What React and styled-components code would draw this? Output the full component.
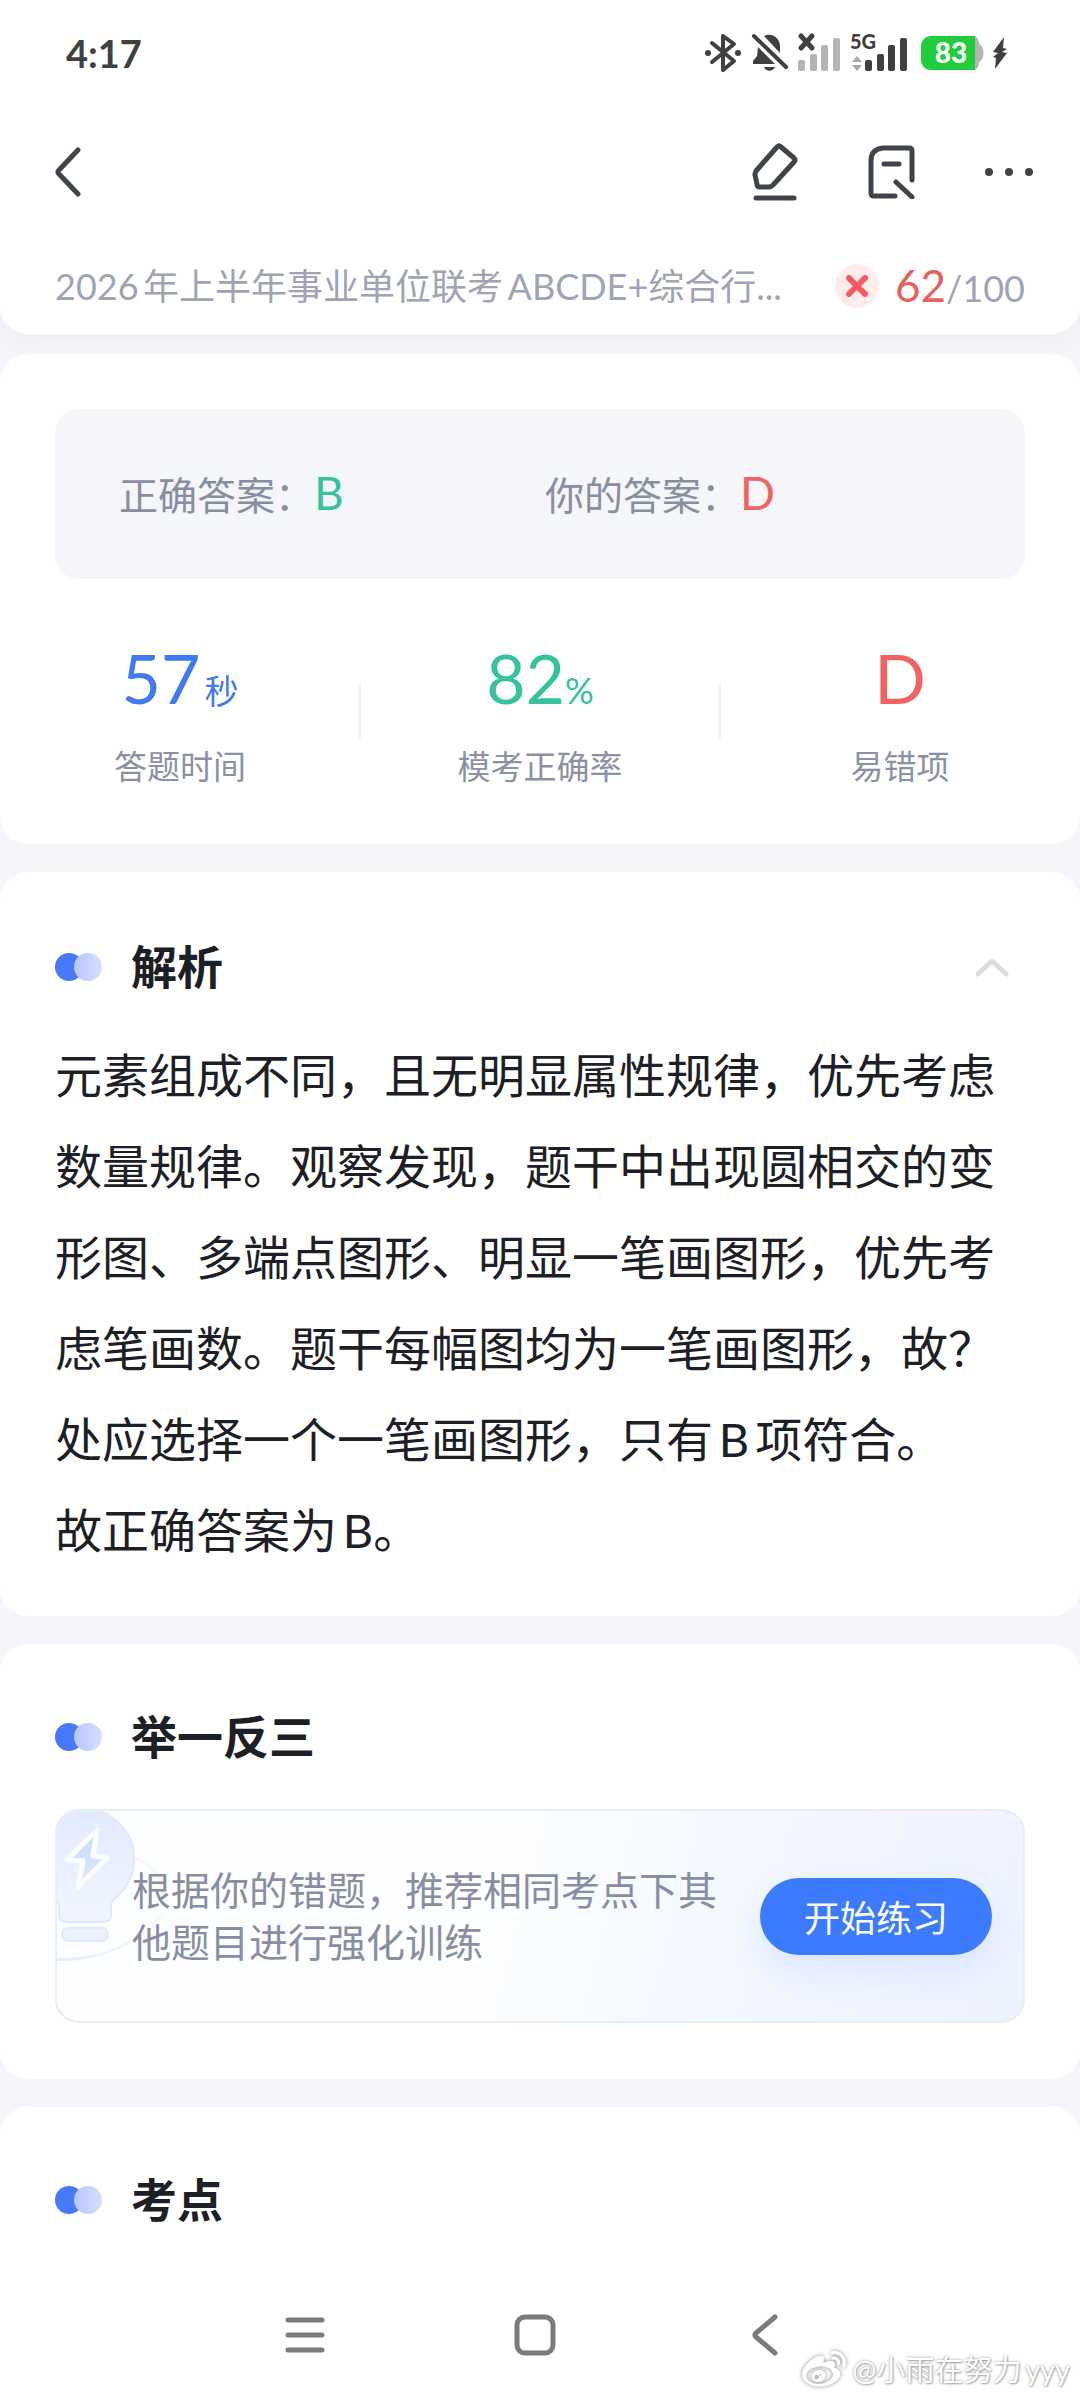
import React from "react";
import styled, { createGlobalStyle } from "styled-components";
import { FaWeibo } from "react-icons/fa";

const GlobalStyle = createGlobalStyle`
  *, *::before, *::after { box-sizing: border-box; }
  body {
    margin: 0;
    background: #f5f6fa;
    font-family: Lato, "Noto Sans CJK SC", sans-serif;
    text-autospace: normal;
  }
  h2, p, dl, dt, dd { margin: 0; }
  button {
    border: 0;
    padding: 0;
    background: none;
    font: inherit;
    color: inherit;
    cursor: pointer;
  }
  svg { display: block; flex: none; }
`;

const Screen = styled.div`
  position: relative;
  display: flex;
  flex-direction: column;
  min-height: 100vh;
`;

const Header = styled.header`
  position: relative;
  background: #fff;
  border-radius: 0 0 28px 28px;
  box-shadow: 0 4px 28px rgba(40, 50, 80, 0.05);
`;

const StatusBar = styled.div`
  display: flex;
  align-items: center;
  justify-content: space-between;
  height: 106px;
  padding: 0 72px 0 66px;
  color: #404040;
`;

const Clock = styled.time`
  font-size: 38px;
  font-weight: 700;
  line-height: 48px;
`;

const StatusIcons = styled.div`
  display: flex;
  align-items: center;
  gap: 10px;
  svg { overflow: visible; }
`;

const Toolbar = styled.nav`
  display: flex;
  align-items: center;
  justify-content: space-between;
  height: 132px;
  padding: 0 39px 0 36px;
  color: #3f444a;
`;

const Tools = styled.div`
  display: flex;
  gap: 53px;
`;

const IconButton = styled.button`
  display: flex;
  align-items: center;
  justify-content: center;
  width: 64px;
  height: 64px;
`;

const PaperRow = styled.div`
  display: flex;
  align-items: center;
  height: 96px;
  padding: 0 55px;
  color: #9ea4b5;
  font-size: 36px;
`;

const PaperTitle = styled.div`
  flex: 1;
  min-width: 0;
  margin-right: 44px;
  overflow: hidden;
  line-height: 56px;
  white-space: nowrap;
  text-overflow: ellipsis;
`;

const WrongMark = styled.span`
  display: flex;
  align-items: center;
  justify-content: center;
  width: 44px;
  height: 44px;
  margin-right: 16px;
  border-radius: 50%;
  background: #ffecec;
`;

const Score = styled.div`
  display: flex;
  align-items: baseline;
  line-height: 48px;
  white-space: nowrap;
`;

const ScoreNow = styled.span`
  color: #e8605e;
  font-size: 44px;
`;

const Main = styled.main`
  display: flex;
  flex: 1;
  flex-direction: column;
  gap: 28px;
  margin-top: 20px;
`;

const Card = styled.section`
  padding: ${(p) => p.$pad};
  border-radius: ${(p) => (p.$last ? "28px 28px 0 0" : "28px")};
  background: #fff;
  flex-grow: ${(p) => (p.$last ? 1 : 0)};
`;

const AnswerBox = styled.dl`
  display: grid;
  grid-template-columns: 1fr 1fr;
  align-items: center;
  height: 170px;
  margin: 0 55px;
  padding: 0 54px 0 64px;
  border-radius: 24px;
  background: #f5f6fa;
`;

const Answer = styled.div`
  display: flex;
  align-items: baseline;
  color: #868ea2;
  font-size: 39px;
  line-height: 56px;
`;

const AnswerValue = styled.dd`
  color: ${(p) => p.$color};
  font-size: 46px;
`;

const Stats = styled.dl`
  display: grid;
  grid-template-columns: repeat(3, 1fr);
  margin-top: 59px;
`;

const Stat = styled.div`
  position: relative;
  display: flex;
  flex-direction: column-reverse;
  align-items: center;
  &:not(:last-child)::after {
    content: "";
    position: absolute;
    top: 46px;
    right: -1px;
    width: 3px;
    height: 55px;
    background: #f1f4f6;
  }
`;

const StatValue = styled.dd`
  display: flex;
  align-items: baseline;
  height: 80px;
  color: ${(p) => p.$color};
  font-size: 68px;
  line-height: 80px;
`;

const Unit = styled.small`
  margin-left: ${(p) => (p.$spaced ? "4px" : "0")};
  font-size: ${(p) => (p.$spaced ? "34px" : "36px")};
  line-height: 48px;
`;

const StatLabel = styled.dt`
  margin-top: 24px;
  color: #8a91a5;
  font-size: 33px;
  line-height: 48px;
`;

const CardHead = styled.div`
  display: flex;
  align-items: center;
  height: 70px;
  gap: 28px;
`;

const CardTitle = styled.h2`
  flex: 1;
  color: #1c2024;
  font-size: 46px;
  font-weight: 700;
  line-height: 70px;
`;

const Paragraph = styled.p`
  color: #1c2024;
  font-size: 47px;
  line-height: 91px;
`;

const Explanation = styled.div`
  margin-top: 28px;
`;

const Promo = styled.div`
  position: relative;
  display: flex;
  align-items: center;
  gap: 34px;
  height: 214px;
  margin-top: 37px;
  padding: 0 31px 0 75px;
  overflow: hidden;
  border: 2px solid #e6edf4;
  border-radius: 24px;
  background: linear-gradient(105deg, #fcfeff 45%, #f3f7ff 72%, #edf2ff 100%);
`;

const PromoArt = styled.svg`
  position: absolute;
  top: -2px;
  left: -2px;
`;

const PromoText = styled.p`
  position: relative;
  flex: 1;
  color: #878ea3;
  font-size: 39px;
  line-height: 52px;
`;

const StartButton = styled.button`
  width: 232px;
  height: 77px;
  border-radius: 39px;
  background: #3c7bfd;
  box-shadow: 0 16px 36px rgba(60, 123, 253, 0.12);
  color: #fff;
  font-size: 36px;
`;

const SystemNav = styled.nav`
  display: flex;
  align-items: center;
  justify-content: center;
  gap: 166px;
  height: 130px;
  padding-right: 10px;
  background: #fff;
  color: #7b7b7b;
`;

const Watermark = styled.div`
  position: absolute;
  right: 10px;
  bottom: 8px;
  display: flex;
  align-items: center;
  gap: 6px;
  color: #fff;
  font-size: 29px;
  line-height: 44px;
  text-shadow: 0 0 3px rgba(0, 0, 0, 0.4), 1px 1px 2px rgba(0, 0, 0, 0.25);
  svg { filter: drop-shadow(0 0 2px rgba(0, 0, 0, 0.45)); }
`;

const stroke = {
  fill: "none",
  stroke: "currentColor",
  strokeLinecap: "round",
  strokeLinejoin: "round",
};

function Bars({ x, color }) {
  return (
    <g fill={color}>
      <rect x={x} y="27" width="7" height="11" rx="2" />
      <rect x={x + 12} y="21" width="7" height="17" rx="2" />
      <rect x={x + 23} y="12" width="7" height="26" rx="2" />
      <rect x={x + 35} y="5" width="7" height="33" rx="2" />
    </g>
  );
}

function StatusGlyphs() {
  return (
    <StatusIcons>
      <svg width="37" height="40" viewBox="0 0 37 40" aria-label="蓝牙">
        <path d="M7 10 29 28 18 37V3L29 11 7 29" {...stroke} strokeWidth="4" />
        <circle cx="3" cy="20" r="3" fill="currentColor" />
        <circle cx="33" cy="20" r="3" fill="currentColor" />
      </svg>
      <svg width="36" height="40" viewBox="0 0 36 40" aria-label="静音">
        <path d="M12 3C20-1 28 5 28 13v7ZM6 14 23 31H1v-3l4-5ZM12 34h11c-2 5-9 5-11 0Z" fill="currentColor" />
        <path d="M2 3 34 34" {...stroke} strokeWidth="4" />
      </svg>
      <svg width="42" height="40" viewBox="0 0 42 40" aria-label="无信号">
        <Bars x={0} color="#b4b4b4" />
        <path d="M3 3 14 15M14 3 3 15" {...stroke} strokeWidth="5" />
      </svg>
      <svg width="57" height="52" viewBox="0 -6 57 52" aria-label="5G 信号">
        <text x="0" y="16" fontSize="20" fontWeight="900" fill="currentColor">5G</text>
        <path d="m2 29 5-6 5 6ZM2 32l5 6 5-6Z" fill="#a8a8a8" />
        <Bars x={15} color="#404040" />
      </svg>
      <svg width="65" height="34" viewBox="-4 0 65 34" aria-label="电量">
        <path d="M46 0h6c4 0 6 4 6 8 6 2 6 16 0 18 0 4-2 8-6 8h-6Z" fill="#b4b4b4" />
        <path d="M10 0h44v34H10C4 34 0 29 0 24V10C0 5 4 0 10 0Z" fill="#22cd3c" />
        <text x="30" y="27" fontSize="28" fontWeight="900" textAnchor="middle" fill="#fff">83</text>
      </svg>
      <svg width="16" height="34" viewBox="0 0 16 34" aria-label="充电中">
        <path d="M12 1 1 16l5 1-5 4 3 1-1 11L15 17l-5-1 5-3-4-1Z" fill="currentColor" />
      </svg>
    </StatusIcons>
  );
}

function TwinDots() {
  return (
    <svg width="48" height="28" viewBox="0 0 48 28" aria-hidden="true">
      <defs>
        <linearGradient id="twin">
          <stop offset="0" stopColor="#b7c6fb" />
          <stop offset="1" stopColor="#d5dffd" />
        </linearGradient>
      </defs>
      <circle cx="14" cy="14" r="14" fill="#4a78fa" />
      <circle cx="33" cy="14" r="14" fill="url(#twin)" />
    </svg>
  );
}

function BulbArt() {
  return (
    <PromoArt width="130" height="160" viewBox="0 0 130 160" aria-hidden="true">
      <defs>
        <linearGradient id="bulb" x1="0" y1="0" x2="0" y2="1">
          <stop offset="0" stopColor="#e1eafe" />
          <stop offset="1" stopColor="#f1f5ff" />
        </linearGradient>
        <linearGradient id="ring" x1="0" x2="1">
          <stop offset="0" stopColor="#e3ebfc" />
          <stop offset="1" stopColor="#e3ebfc" stopOpacity="0.2" />
        </linearGradient>
        <linearGradient id="spark" x1="0" y1="0" x2="0" y2="1">
          <stop offset="0" stopColor="#c9dafd" />
          <stop offset="1" stopColor="#dfe8fe" />
        </linearGradient>
      </defs>
      <path d="M-4 150C30 153 58 143 80 130c22-14 32-28 30-42-2-18-12-32-30-39" fill="none" stroke="url(#ring)" strokeWidth="3" />
      <path d="M4 98q0-4-2-6A50 50 0 1 1 59 90q-3 3-3 8v7c0 5-3 8-8 8H12c-5 0-8-3-8-8Z" fill="url(#bulb)" stroke="#e0e9fb" strokeWidth="2" />
      <rect x="7" y="119" width="46" height="13" rx="6" fill="#e9f0fe" stroke="#e3ebfb" strokeWidth="2" />
      <path d="M42 21 38 47l14 2-29 29 5-26-16-1Z" fill="url(#spark)" stroke="#fcfeff" strokeWidth="5" strokeLinejoin="round" />
    </PromoArt>
  );
}

function SectionHead({ title, children }) {
  return (
    <CardHead>
      <TwinDots />
      <CardTitle>{title}</CardTitle>
      {children}
    </CardHead>
  );
}

const stats = [
  { label: "答题时间", value: "57", unit: "秒", color: "#3f7bf0", spaced: true },
  { label: "模考正确率", value: "82", unit: "%", color: "#36c29c" },
  { label: "易错项", value: "D", color: "#f26262" },
];

const answers = [
  { label: "正确答案\uFF1A", value: "B", color: "#36c29c" },
  { label: "你的答案\uFF1A", value: "D", color: "#f26262" },
];

const explanation = [
  "元素组成不同\uFF0C且无明显属性规律\uFF0C优先考虑数量规律。观察发现\uFF0C题干中出现圆相交的变形图、多端点图形、明显一笔画图形\uFF0C优先考虑笔画数。题干每幅图均为一笔画图形\uFF0C故\uFF1F处应选择一个一笔画图形\uFF0C只有B项符合。",
  "故正确答案为B。",
];

const practiceHint = "根据你的错题\uFF0C推荐相同考点下其他题目进行强化训练";

export default function App() {
  return (
    <Screen>
      <GlobalStyle />
      <Header>
        <StatusBar>
          <Clock>4:17</Clock>
          <StatusGlyphs />
        </StatusBar>
        <Toolbar>
          <IconButton aria-label="返回">
            <svg width="28" height="52" viewBox="0 0 28 52">
              <path d="M24 4 5 24q-2 2 0 4L24 48" {...stroke} strokeWidth="5" />
            </svg>
          </IconButton>
          <Tools>
            <IconButton aria-label="草稿">
              <svg width="48" height="60" viewBox="0 0 48 60">
                <path d="M26 5q2-2 4 0l13 11q2 2 0 4L22 43q-2 2-4 2H9q-3 0-3-3L4 33q0-2 1-4Z" {...stroke} strokeWidth="5" />
                <path d="M5 56h38" {...stroke} strokeWidth="5" />
              </svg>
            </IconButton>
            <IconButton aria-label="笔记">
              <svg width="48" height="54" viewBox="0 0 48 54">
                <path d="M44 35V6q0-3-3-3H15Q3 4 3 16v32q0 3 3 3h21M28 37l16 15M16 19h15" {...stroke} strokeWidth="5" />
              </svg>
            </IconButton>
            <IconButton aria-label="更多">
              <svg width="52" height="10" viewBox="0 0 52 10" fill="currentColor">
                <circle cx="6" cy="5" r="4" />
                <circle cx="26" cy="5" r="4" />
                <circle cx="46" cy="5" r="4" />
              </svg>
            </IconButton>
          </Tools>
        </Toolbar>
        <PaperRow>
          <PaperTitle>2026年上半年事业单位联考ABCDE+综合行...</PaperTitle>
          <WrongMark>
            <svg width="22" height="22" viewBox="0 0 22 22">
              <path d="m3 3 16 16M19 3 3 19" fill="none" stroke="#f65a60" strokeWidth="6" strokeLinecap="round" />
            </svg>
          </WrongMark>
          <Score>
            <ScoreNow>62</ScoreNow>
            <span>/100</span>
          </Score>
        </PaperRow>
      </Header>

      <Main>
        <Card $pad="55px 0 54px">
          <AnswerBox>
            {answers.map((a) => (
              <Answer key={a.label}>
                <dt>{a.label}</dt>
                <AnswerValue $color={a.color}>{a.value}</AnswerValue>
              </Answer>
            ))}
          </AnswerBox>
          <Stats>
            {stats.map((s) => (
              <Stat key={s.label}>
                <StatLabel>{s.label}</StatLabel>
                <StatValue $color={s.color}>
                  <span>{s.value}</span>
                  {s.unit && <Unit $spaced={s.spaced}>{s.unit}</Unit>}
                </StatValue>
              </Stat>
            ))}
          </Stats>
        </Card>

        <Card $pad="60px 55px 40px">
          <SectionHead title="解析">
            <IconButton aria-label="收起">
              <svg width="34" height="20" viewBox="0 0 34 20">
                <path d="M2 17 16 4l14 13" fill="none" stroke="#dadcdd" strokeWidth="5" strokeLinecap="round" strokeLinejoin="round" />
              </svg>
            </IconButton>
          </SectionHead>
          <Explanation>
            {explanation.map((text) => (
              <Paragraph key={text}>{text}</Paragraph>
            ))}
          </Explanation>
        </Card>

        <Card $pad="58px 55px 56px">
          <SectionHead title="举一反三" />
          <Promo>
            <BulbArt />
            <PromoText>{practiceHint}</PromoText>
            <StartButton>开始练习</StartButton>
          </Promo>
        </Card>

        <Card $last $pad="58px 55px 0">
          <SectionHead title="考点" />
        </Card>
      </Main>

      <SystemNav>
        <IconButton aria-label="最近任务">
          <svg width="40" height="38" viewBox="0 0 40 38">
            <path d="M3 4h34M3 19h34M3 34h34" {...stroke} strokeWidth="5" />
          </svg>
        </IconButton>
        <IconButton aria-label="主屏幕">
          <svg width="42" height="42" viewBox="0 0 42 42">
            <rect x="3" y="3" width="36" height="36" rx="8" {...stroke} strokeWidth="5" />
          </svg>
        </IconButton>
        <IconButton aria-label="返回上一页">
          <svg width="28" height="42" viewBox="0 0 28 42">
            <path d="M24 3 5 19q-2 2 0 4L24 39" {...stroke} strokeWidth="5" />
          </svg>
        </IconButton>
      </SystemNav>
      <Watermark>
        <FaWeibo size={44} />
        <span>@小雨在努力yyy</span>
      </Watermark>
    </Screen>
  );
}
